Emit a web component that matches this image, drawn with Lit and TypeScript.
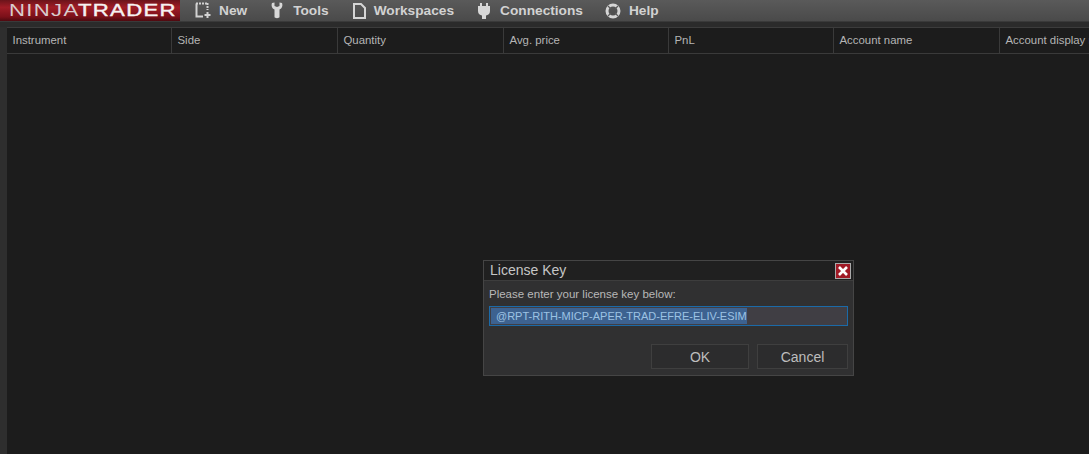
import { LitElement, html, css } from "lit";
import { customElement } from "lit/decorators.js";

const COLS = ["Instrument", "Side", "Quantity", "Avg. price", "PnL", "Account name", "Account display name"];

@customElement("app-root")
export class AppRoot extends LitElement {
  static styles = css`
    :host { display: block; width: 1089px; height: 454px; overflow: hidden; position: relative; background: #2b2b2b; font-family: "Liberation Sans", Arial, sans-serif; }
    .menubar { height: 21px; display: flex; align-items: center; background: linear-gradient(#5a5a5a, #4a4a4a); border-bottom: 1px solid #3a3a3a; box-sizing: content-box; }
    .logo { width: 180px; height: 21px; flex: none; background: linear-gradient(#6b141b, #a01c26 35%, #7b1019 80%, #4e0a10); box-sizing: border-box; overflow: hidden; }
    .wordmark { display: inline-block; color: #d8cdce; font-size: 16.500px; letter-spacing: 1px; line-height: 20px; margin-left: 9px; white-space: nowrap; transform: scaleX(1.34); transform-origin: left center; }
    .wordmark b { font-weight: 400; color: #f6f2f2; -webkit-text-stroke: 0.4px #f6f2f2; }
    .menu { display: flex; align-items: center; font-size: 13.700px; font-weight: 700; color: #d2d2d2; height: 21px; }
    .item { display: flex; align-items: center; white-space: nowrap; }
    .item svg { display: block; flex: none; }
    .new { margin-left: 15px; gap: 8px; } .tools { margin-left: 24px; gap: 10px; } .ws { margin-left: 24px; gap: 8px; } .conn { margin-left: 24px; gap: 10px; } .help { margin-left: 22px; gap: 8px; }
    .main { display: flex; height: 432px; padding-top: 5px; box-sizing: border-box; }
    .rail { width: 7px; flex: none; background: #2e2e2e; }
    .grid { flex: 1; min-width: 0; background: #1c1c1c; border-top: 1px solid #3c3c3c; overflow: hidden; }
    .head { display: grid; grid-template-columns: 165px 166px 166px 165px 165px 166px 120px; height: 25px; border-bottom: 1px solid #3a3a3a; color: #b5b5b5; font-size: 11.400px; }
    .cell { padding-left: 5.500px; line-height: 24px; border-right: 1px solid #3a3a3a; white-space: nowrap; overflow: hidden; box-sizing: border-box; }
    .cell:last-child { border-right: 0; }
    .dialog { position: absolute; left: 483px; top: 260px; width: 371px; height: 116px; box-sizing: border-box; background: #303031; border: 1px solid #454545; display: flex; flex-direction: column; }
    .title { height: 19px; flex: none; background: #202020; border-bottom: 1px solid #3d3d3d; color: #c6c6c6; font-size: 14px; line-height: 19px; padding-left: 6px; display: flex; align-items: center; justify-content: space-between; }
    .close { width: 16px; height: 16px; margin-right: 2px; box-sizing: border-box; background: #a01a26; border: 1px solid #aaa; display: flex; align-items: center; justify-content: center; }
    .body { padding: 6px 5px 0 5px; display: flex; flex-direction: column; }
    .label { font-size: 11.500px; color: #b8b8b8; line-height: 14px; height: 14px; }
    .input { margin-top: 5px; height: 20px; width: 359px; box-sizing: border-box; background: #403e44; border: 1px solid #1b6aa8; padding-left: 1px; display: flex; align-items: center; }
    .sel { background: #3d6290; color: #9cc2e4; font-size: 11px; line-height: 16px; height: 16px; padding: 0 0 0 5px; white-space: nowrap; }
    .buttons { display: flex; justify-content: flex-end; gap: 8px; margin-top: 18px; }
    .btn { height: 25px; box-sizing: border-box; background: #2c2c2d; border: 1px solid #3f3f3f; color: #bdbdbd; font-size: 14px; display: flex; align-items: center; justify-content: center; }
    .ok { width: 98px; } .cancel { width: 91px; }
  `;

  render() {
    return html`
      <div class="menubar">
        <div class="logo"><span class="wordmark">NINJA<b>TRADER</b></span></div>
        <div class="menu">
          <div class="item new">
            <svg width="16" height="17" viewBox="0 0 16 17" fill="none" stroke="#d2d2d2"><path d="M8 14.500H1.500V1.500" stroke-width="2"/><path d="M1 1.500H13M12.500 1V8" stroke-width="2" stroke-dasharray="2 1"/><path d="M12.500 10v6M9.500 13h6" stroke-width="2"/></svg>
            <span>New</span>
          </div>
          <div class="item tools">
            <svg width="12" height="17" viewBox="0 0 12 17" fill="#d8d8d8"><path d="M1 1 L3.500 0.500 V4 L6 5 L8.500 4 V0.500 L11 1 C12 3.500 11 6.500 8.500 7.500 V15 C8.500 16.500 3.500 16.500 3.500 15 V7.500 C1 6.500 0 3.500 1 1Z"/></svg>
            <span>Tools</span>
          </div>
          <div class="item ws">
            <svg width="13" height="16" viewBox="0 0 13 16" fill="none" stroke="#d5d5d5" stroke-width="2"><path d="M1 1h7l4 4v10H1z"/></svg>
            <span>Workspaces</span>
          </div>
          <div class="item conn">
            <svg width="12" height="17" viewBox="0 0 12 17" fill="#d8d8d8"><path d="M2 1h2v3H2zM8 1h2v3H8zM0 4h12v5c0 3-2 4-4 4.500V17H4v-3.500C2 13 0 12 0 9z"/></svg>
            <span>Connections</span>
          </div>
          <div class="item help">
            <svg width="16" height="16" viewBox="0 0 16 16" fill="none"><circle cx="8" cy="8" r="6" stroke="#d5d5d5" stroke-width="3"/><path d="M3 3l3 3M13 3l-3 3M3 13l3-3M13 13l-3-3" stroke="#5a5a5a" stroke-width="1.200"/></svg>
            <span>Help</span>
          </div>
        </div>
      </div>
      <div class="main">
        <div class="rail"></div>
        <div class="grid">
          <div class="head">${COLS.map((c) => html`<div class="cell">${c}</div>`)}</div>
        </div>
      </div>
      <div class="dialog">
        <div class="title">
          <span>License Key</span>
          <div class="close"><svg width="12" height="12" viewBox="0 0 12 12"><path d="M2 2l8 8M10 2l-8 8" stroke="#fff" stroke-width="2.600"/></svg></div>
        </div>
        <div class="body">
          <div class="label">Please enter your license key below:</div>
          <div class="input"><span class="sel">@RPT-RITH-MICP-APER-TRAD-EFRE-ELIV-ESIM</span></div>
          <div class="buttons">
            <div class="btn ok">OK</div>
            <div class="btn cancel">Cancel</div>
          </div>
        </div>
      </div>
    `;
  }
}
